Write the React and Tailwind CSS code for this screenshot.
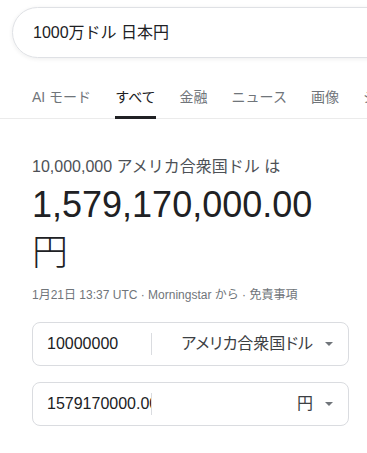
import React from "react";

const tabs = [
  { label: "AI モード" },
  { label: "すべて", active: true },
  { label: "金融" },
  { label: "ニュース" },
  { label: "画像" },
  { label: "ショッピング" },
];

const Caret = () => (
  <svg width="8" height="4" viewBox="0 0 8 4" className="shrink-0">
    <path d="M0 0 L8 0 L4 4 Z" fill="#70757a" />
  </svg>
);

const ConverterRow = ({ value, unit }) => (
  <div className="flex items-center h-[44px] w-[317px] rounded-lg border border-[#dadce0] pl-[14px] pr-[15px]">
    <input
      readOnly
      value={value}
      className="w-[104px] bg-transparent text-[16px] text-[#202124] outline-none"
    />
    <div className="h-[22px] w-px bg-[#dadce0]" />
    <div className="flex flex-1 items-center justify-end gap-[12px]">
      <span className="text-[16px] text-[#3c4043] [font-feature-settings:'palt']">{unit}</span>
      <Caret />
    </div>
  </div>
);

export default function App() {
  return (
    <div className="w-[367px] h-[453px] overflow-hidden bg-white font-['Liberation_Sans','Noto_Sans_CJK_JP',sans-serif]">
      <div className="pt-[7px] pl-[12px]">
        <div className="flex items-center h-[51px] w-[420px] rounded-full border border-[#dfe1e5] shadow-[0_1px_4px_rgba(32,33,36,0.08)] pl-[20px]">
          <span className="text-[16px] text-[#202124]">1000万ドル 日本円</span>
        </div>
      </div>

      <div className="mt-[19px] flex border-b border-[#ebebeb] pl-[20px] whitespace-nowrap">
        {tabs.map((t) => (
          <div
            key={t.label}
            className={`relative flex h-[41px] items-center px-3 text-[14px] ${
              t.active ? "text-[#202124]" : "text-[#70757a]"
            }`}
          >
            {t.label}
            {t.active && (
              <div className="absolute bottom-[-1px] left-3 right-3 h-[3px] bg-[#202124]" />
            )}
          </div>
        ))}
      </div>

      <div className="pl-[32px] pt-[36px]">
        <div className="text-[16px] leading-[24px] text-[#4d5156]">
          10,000,000 アメリカ合衆国ドル は
        </div>
        <div className="mt-[2px] text-[36px] leading-[48px] text-[#202124]">
          1,579,170,000.00
          <br />
          <span className="font-light">円</span>
        </div>
        <div className="mt-[10px] text-[12px] leading-[16px] text-[#70757a]">
          1月21日 13:37 UTC · Morningstar から · 免責事項
        </div>

        <div className="mt-[19px] flex flex-col gap-4">
          <ConverterRow value="10000000" unit="アメリカ合衆国ドル" />
          <ConverterRow value="1579170000.00" unit="円" />
        </div>
      </div>
    </div>
  );
}
